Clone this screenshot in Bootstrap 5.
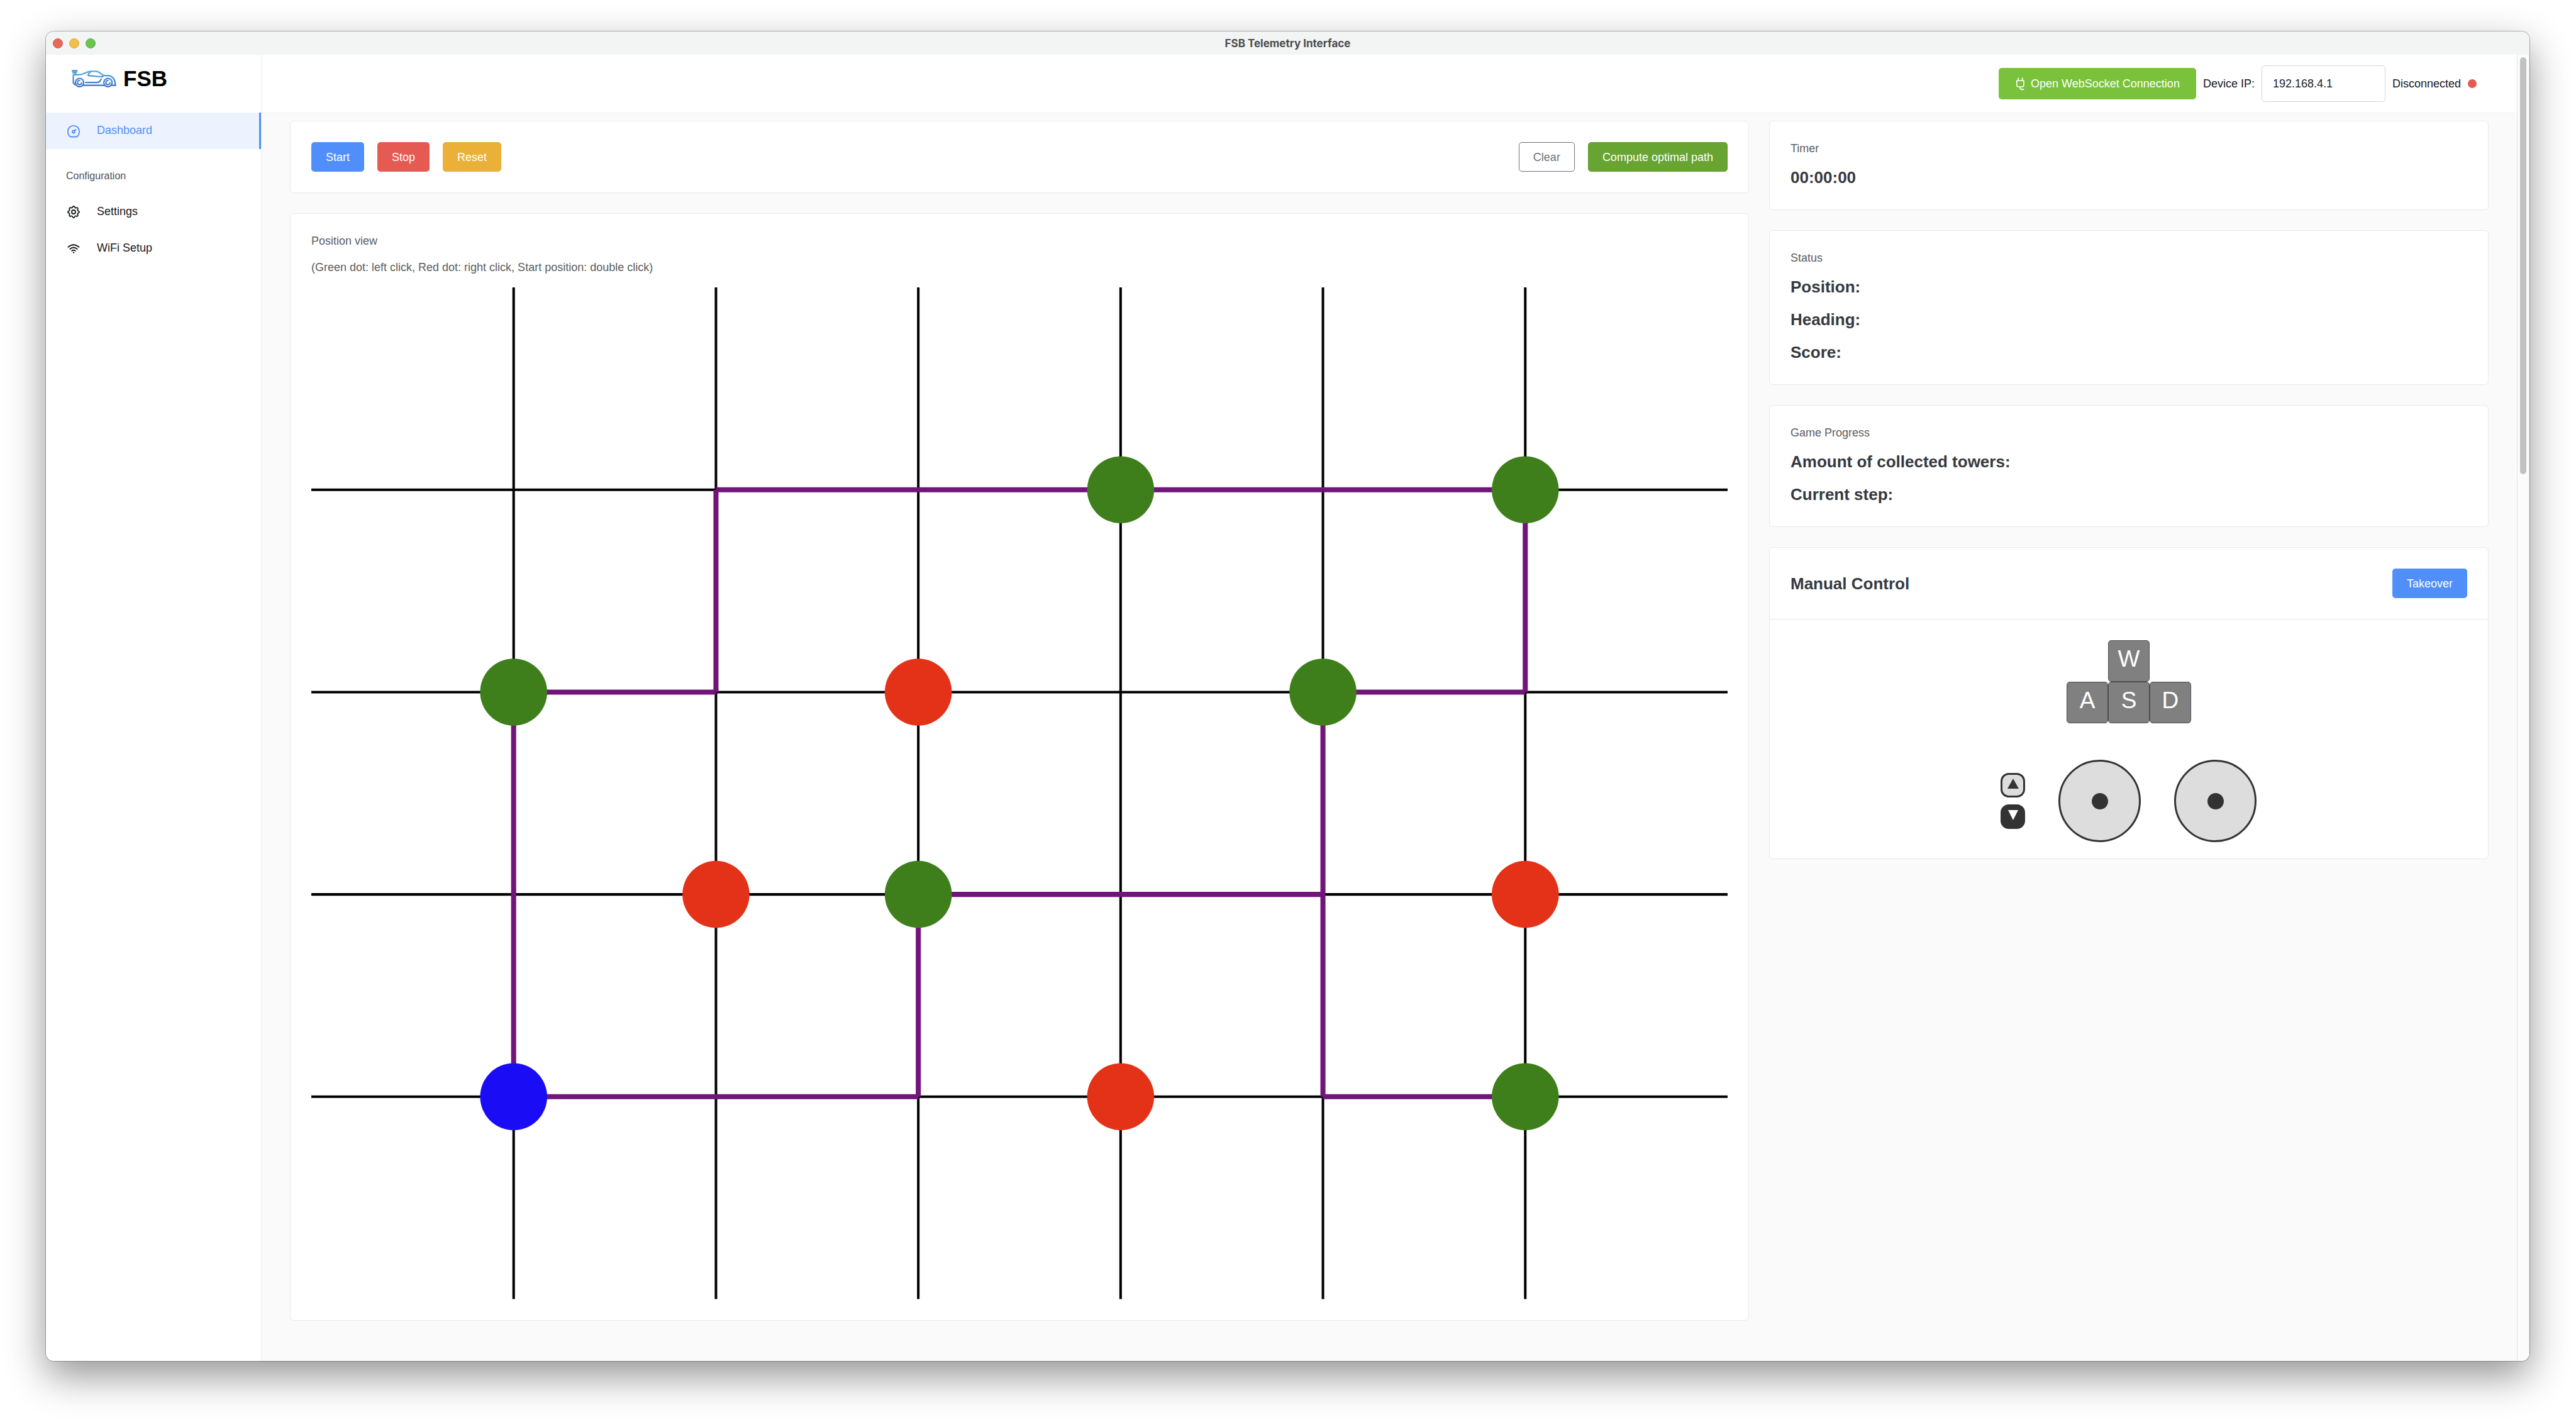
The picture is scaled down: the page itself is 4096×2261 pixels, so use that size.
<!DOCTYPE html>
<html lang="en">
<head>
<meta charset="utf-8">
<meta name="viewport" content="width=device-width, initial-scale=1">
<title>FSB Telemetry Interface</title>
<link href="https://cdn.jsdelivr.net/npm/bootstrap@5.3.0/dist/css/bootstrap.min.css" rel="stylesheet">
<style>
  :root { --fsb-blue: #508ffa; --fsb-line: #e6e9ef; }
  body {
    font-family: "Liberation Sans", Arial, sans-serif;
    font-size: 18px; line-height: 20px; color: #16181b; background: #fff;
    padding: 50px 74px 97px 73px;
  }
  /* Desktop window */
  .app-window {
    border-radius: 13px; overflow: hidden;
    box-shadow: 0 0 0 1px rgba(0,0,0,.28), 0 24px 62px rgba(0,0,0,.42);
  }
  .title-bar { height: 37px; background: #f3f5f4; padding: 0 11px; display: grid; grid-template-columns: 1fr auto 1fr; }
  .title-text { font: 700 17px/20px Inter, "Liberation Sans", sans-serif; color: #4b4c4c; }
  .light { width: 16px; height: 16px; border-radius: 50%; border: 1px solid; }
  .light-close { background: #e8695c; border-color: #d3574a; }
  .light-min { background: #f2bf4b; border-color: #dba63a; }
  .light-zoom { background: #6ac650; border-color: #57ae40; }
  /* Sidebar */
  .side { width: 343px; border-right: 1px solid #efefef; background: #fff; }
  .brand { height: 92px; padding: 0 41px 17px; gap: 11px; color: #000; font-size: 35px; line-height: 40px; }
  .side-link { height: 58px; padding: 0 32px; gap: 25px; color: #16181b; }
  .side-link span { padding-bottom: 3px; }
  .side-link.active { background: #ecf3fe; color: var(--fsb-blue); border-right: 3px solid var(--fsb-blue); }
  .side-heading { font-size: 16px; font-weight: 400; line-height: 20px; color: #4b5259; padding: 33px 32px 18px; margin: 0; }
  .side-icon { width: 24px; height: 24px; fill: none; stroke: currentColor; stroke-width: 1.8; stroke-linecap: round; stroke-linejoin: round; }
  /* Header */
  .top-bar { height: 93px; border-bottom: 1px solid #efefef; background: #fff; padding-right: 64px; gap: 11px; }
  .ip-field { width: 197px; height: 58px; border: 1px solid #cfd4da; border-radius: 5px; padding: 0 17px; font-size: 18px; color: #212529; }
  .state-dot { width: 14px; height: 14px; background: #e65a54; }
  /* Content */
  .main-area { background: #fafafa; }
  .content { padding: 12px 45px 0; }
  .content > .row { --bs-gutter-x: 32px; }
  .stack { display: flex; flex-direction: column; gap: 32px; }
  .panel { background: #fff; border: 1px solid var(--fsb-line); border-radius: 6px; }
  .panel-pad { padding: 33px; }
  .btn { --bs-btn-font-size: 18px; --bs-btn-line-height: 20px; --bs-btn-border-radius: 5px; height: 47px; padding: 0 22px; color: #fff; }
  .btn-start { background: var(--fsb-blue); }
  .btn-stop { background: #e65a54; }
  .btn-reset { background: #eab038; }
  .btn-wipe { background: #fff; color: #6b727d; border-color: #6b727d; }
  .btn-path { background: #67a431; border-color: #5f9a2d; }
  .btn-socket { background: #7ac23b; height: 50px; gap: 6px; padding: 0 25px 0 23px; }
  .btn-row { gap: 21px; }
  .caption { color: #5b5d60; font-size: 18px; font-weight: 400; line-height: 20px; margin: 0 0 18px; }
  .caption-wide { margin-bottom: 22px; }
  .figure-line { font-size: 26px; font-weight: 700; line-height: 36px; color: #363940; margin: 0 0 16px; }
  .figure-line:last-child { margin-bottom: 0; }
  .panel-head { border-bottom: 1px solid var(--fsb-line); padding: 33px; }
  .control-body { padding: 33px 0 26px; gap: 58px; }
  .key { width: 66px; height: 66px; background: #808080; border: 1px solid #4d4d4d; border-radius: 5px; color: #fff; font-size: 37px; line-height: 40px; padding: 0 0 7px; }
  .stick { width: 131px; height: 131px; border-radius: 50%; background: #ddd; border: 3px solid #333; }
  .stick span { width: 26px; height: 26px; border-radius: 50%; background: #333; }
  .sticks { gap: 53px; }
  .gear-col { gap: 11px; }
  .gear-btn { width: 39px; height: 39px; border: 3px solid #333; border-radius: 13px; background: #ddd; color: #333; padding: 0 0 5px; }
  .gear-btn.is-on { background: #333; color: #fff; }
  .gear-btn svg { width: 18px; height: 16px; display: block; fill: currentColor; }
  /* Scroll bar */
  .track { width: 20px; background: #fbfbfb; border-left: 1px solid #e6e6e6; border-right: 1px solid #ececec; padding: 4px 4px 0; }
  .thumb { height: 32%; border-radius: 5px; background: #c1c1c1; }
</style>
</head>
<body class="vh-100">
<div class="app-window d-flex flex-column h-100">
  <div class="title-bar align-items-center">
    <div class="d-flex" style="gap:10px">
      <span class="light light-close"></span><span class="light light-min"></span><span class="light light-zoom"></span>
    </div>
    <div class="title-text">FSB Telemetry Interface</div>
    <div></div>
  </div>

  <div class="d-flex flex-fill">
    <nav class="side flex-shrink-0">
      <a href="#" class="brand d-flex align-items-center fw-bold text-decoration-none">
        <svg width="71" height="28" viewBox="160 266 321 127" fill="none" stroke="url(#carFade)" stroke-width="10" stroke-linecap="round" stroke-linejoin="round" aria-hidden="true">
          <defs><linearGradient id="carFade" gradientUnits="userSpaceOnUse" x1="0" y1="266" x2="0" y2="393"><stop offset="0" stop-color="#58aee8"/><stop offset="1" stop-color="#386bc4"/></linearGradient></defs>
          <path d="M165 271H197L194 283Q192 288 186 288H174Q168 288 167 283ZM172 279H190"/>
          <path d="M183 288L189 299"/>
          <path d="M188 374Q171 368 171 356V302H212C246 302 262 278 300 277H334C358 277 370 297 388 307H420C452 308 474 334 474 377"/>
          <path d="M244 378H394M448 378H476"/>
          <path d="M388 307L380 317L278 307Q282 286 300 278"/>
          <path d="M260 357H344C364 357 364 344 373 332"/>
          <circle cx="216" cy="358" r="30"/><circle cx="421" cy="358" r="30"/>
          <path d="M217 343A15 15 0 1 0 231 359M422 343A15 15 0 1 0 436 359"/>
        </svg>
        <span>FSB</span>
      </a>
      <a href="#" class="side-link active d-flex align-items-center text-decoration-none">
        <svg class="side-icon" viewBox="0 0 24 24"><path d="M7 21.500C4 19.500 2.800 16.500 2.800 13A9.200 9.200 0 0 1 21.200 13C21.200 16.500 20 19.500 17 21.500Z"/><circle cx="12" cy="13.500" r="2"/><path d="M13.500 12L15.500 10"/></svg>
        <span>Dashboard</span>
      </a>
      <h2 class="side-heading">Configuration</h2>
      <a href="#" class="side-link d-flex align-items-center text-decoration-none">
        <svg class="side-icon" viewBox="0 0 24 24"><path d="M10.325 4.317c.426-1.756 2.924-1.756 3.350 0a1.724 1.724 0 0 0 2.573 1.066c1.543-.940 3.310.826 2.370 2.370a1.724 1.724 0 0 0 1.065 2.572c1.756.426 1.756 2.924 0 3.350a1.724 1.724 0 0 0-1.066 2.573c.940 1.543-.826 3.310-2.370 2.370a1.724 1.724 0 0 0-2.572 1.065c-.426 1.756-2.924 1.756-3.350 0a1.724 1.724 0 0 0-2.573-1.066c-1.543.940-3.310-.826-2.370-2.370a1.724 1.724 0 0 0-1.065-2.572c-1.756-.426-1.756-2.924 0-3.350a1.724 1.724 0 0 0 1.066-2.573c-.940-1.543.826-3.310 2.370-2.370 1 .608 2.296.070 2.572-1.065z"/><circle cx="12" cy="12" r="3"/></svg>
        <span>Settings</span>
      </a>
      <a href="#" class="side-link d-flex align-items-center text-decoration-none">
        <svg class="side-icon" viewBox="0 0 24 24"><path d="M3.500 9.800Q12 2.600 20.500 9.800M6.300 13Q12 8 17.700 13M9.200 15.900Q12 13.700 14.800 15.900"/><circle cx="12" cy="18.600" r="1.200" fill="currentColor" stroke="none"/></svg>
        <span>WiFi Setup</span>
      </a>
    </nav>

    <main class="main-area flex-fill">
      <header class="top-bar d-flex align-items-center justify-content-end">
        <button type="button" class="btn btn-socket d-flex align-items-center">
          <svg width="21" height="20" viewBox="44 68 90 88" fill="none" stroke="currentColor" stroke-width="7" stroke-linecap="round" stroke-linejoin="round" aria-hidden="true"><path d="M74 74V90M103 74V90M64 91H113V122Q113 134 101 134H76Q64 134 64 122ZM88 134V143Q88 152 97 152H112"/></svg>
          <span>Open WebSocket Connection</span>
        </button>
        <label for="deviceIp">Device IP:</label>
        <input id="deviceIp" class="ip-field" type="text" value="192.168.4.1">
        <span>Disconnected</span>
        <span class="state-dot rounded-circle"></span>
      </header>

      <div class="content">
        <div class="row">
          <div class="col-8 stack">
            <section class="panel panel-pad d-flex justify-content-between">
              <div class="d-flex btn-row">
                <button type="button" class="btn btn-start">Start</button>
                <button type="button" class="btn btn-stop">Stop</button>
                <button type="button" class="btn btn-reset">Reset</button>
              </div>
              <div class="d-flex btn-row">
                <button type="button" class="btn btn-wipe">Clear</button>
                <button type="button" class="btn btn-path">Compute optimal path</button>
              </div>
            </section>
            <section class="panel panel-pad">
              <p class="caption caption-wide">Position view</p>
              <p class="caption caption-wide">(Green dot: left click, Red dot: right click, Start position: double click)</p>
              <svg class="d-block w-100" viewBox="0 0 2240 1600" role="img" aria-label="Position view">
                <path stroke="#000" stroke-width="4" d="M320 0V1600M640 0V1600M960 0V1600M1280 0V1600M1600 0V1600M1920 0V1600M0 320H2240M0 640H2240M0 960H2240M0 1280H2240"/>
                <path stroke="#71157a" stroke-width="8" d="M320 1280V640M320 640H640M640 640V320M640 320H1920M1920 320V640M1920 640H1600M1600 640V1280M1600 1280H1920M1600 960H960M960 960V1280M960 1280H320"/>
                <g fill="#3e7f1c">
                  <circle cx="1280" cy="320" r="53"/><circle cx="1920" cy="320" r="53"/>
                  <circle cx="320" cy="640" r="53"/><circle cx="1600" cy="640" r="53"/>
                  <circle cx="960" cy="960" r="53"/><circle cx="1920" cy="1280" r="53"/>
                </g>
                <g fill="#e43219">
                  <circle cx="960" cy="640" r="53"/><circle cx="640" cy="960" r="53"/>
                  <circle cx="1920" cy="960" r="53"/><circle cx="1280" cy="1280" r="53"/>
                </g>
                <circle cx="320" cy="1280" r="53" fill="#1a0df5"/>
              </svg>
            </section>
          </div>

          <div class="col-4 stack">
            <section class="panel panel-pad">
              <h3 class="caption">Timer</h3>
              <p class="figure-line">00:00:00</p>
            </section>
            <section class="panel panel-pad">
              <h3 class="caption">Status</h3>
              <p class="figure-line">Position:</p>
              <p class="figure-line">Heading:</p>
              <p class="figure-line">Score:</p>
            </section>
            <section class="panel panel-pad">
              <h3 class="caption">Game Progress</h3>
              <p class="figure-line">Amount of collected towers:</p>
              <p class="figure-line">Current step:</p>
            </section>
            <section class="panel">
              <div class="panel-head d-flex align-items-center justify-content-between">
                <h3 class="figure-line mb-0">Manual Control</h3>
                <button type="button" class="btn btn-start">Takeover</button>
              </div>
              <div class="control-body d-flex flex-column align-items-center">
                <div class="d-flex flex-column align-items-center">
                  <button type="button" class="key">W</button>
                  <div class="d-flex">
                    <button type="button" class="key">A</button>
                    <button type="button" class="key">S</button>
                    <button type="button" class="key">D</button>
                  </div>
                </div>
                <div class="sticks d-flex align-items-center">
                  <div class="gear-col d-flex flex-column">
                    <button type="button" class="gear-btn d-flex align-items-center justify-content-center" aria-label="Up"><svg viewBox="0 0 18 16"><path d="M9 0L18 16H0Z"/></svg></button>
                    <button type="button" class="gear-btn is-on d-flex align-items-center justify-content-center" aria-label="Down"><svg viewBox="0 0 18 16"><path d="M1 0H17L9 16Z"/></svg></button>
                  </div>
                  <div class="stick d-flex align-items-center justify-content-center"><span></span></div>
                  <div class="stick d-flex align-items-center justify-content-center"><span></span></div>
                </div>
              </div>
            </section>
          </div>
        </div>
      </div>
    </main>
    <div class="track flex-shrink-0"><div class="thumb"></div></div>
  </div>
</div>
<script src="https://cdn.jsdelivr.net/npm/bootstrap@5.3.0/dist/js/bootstrap.bundle.min.js"></script>
</body>
</html>
